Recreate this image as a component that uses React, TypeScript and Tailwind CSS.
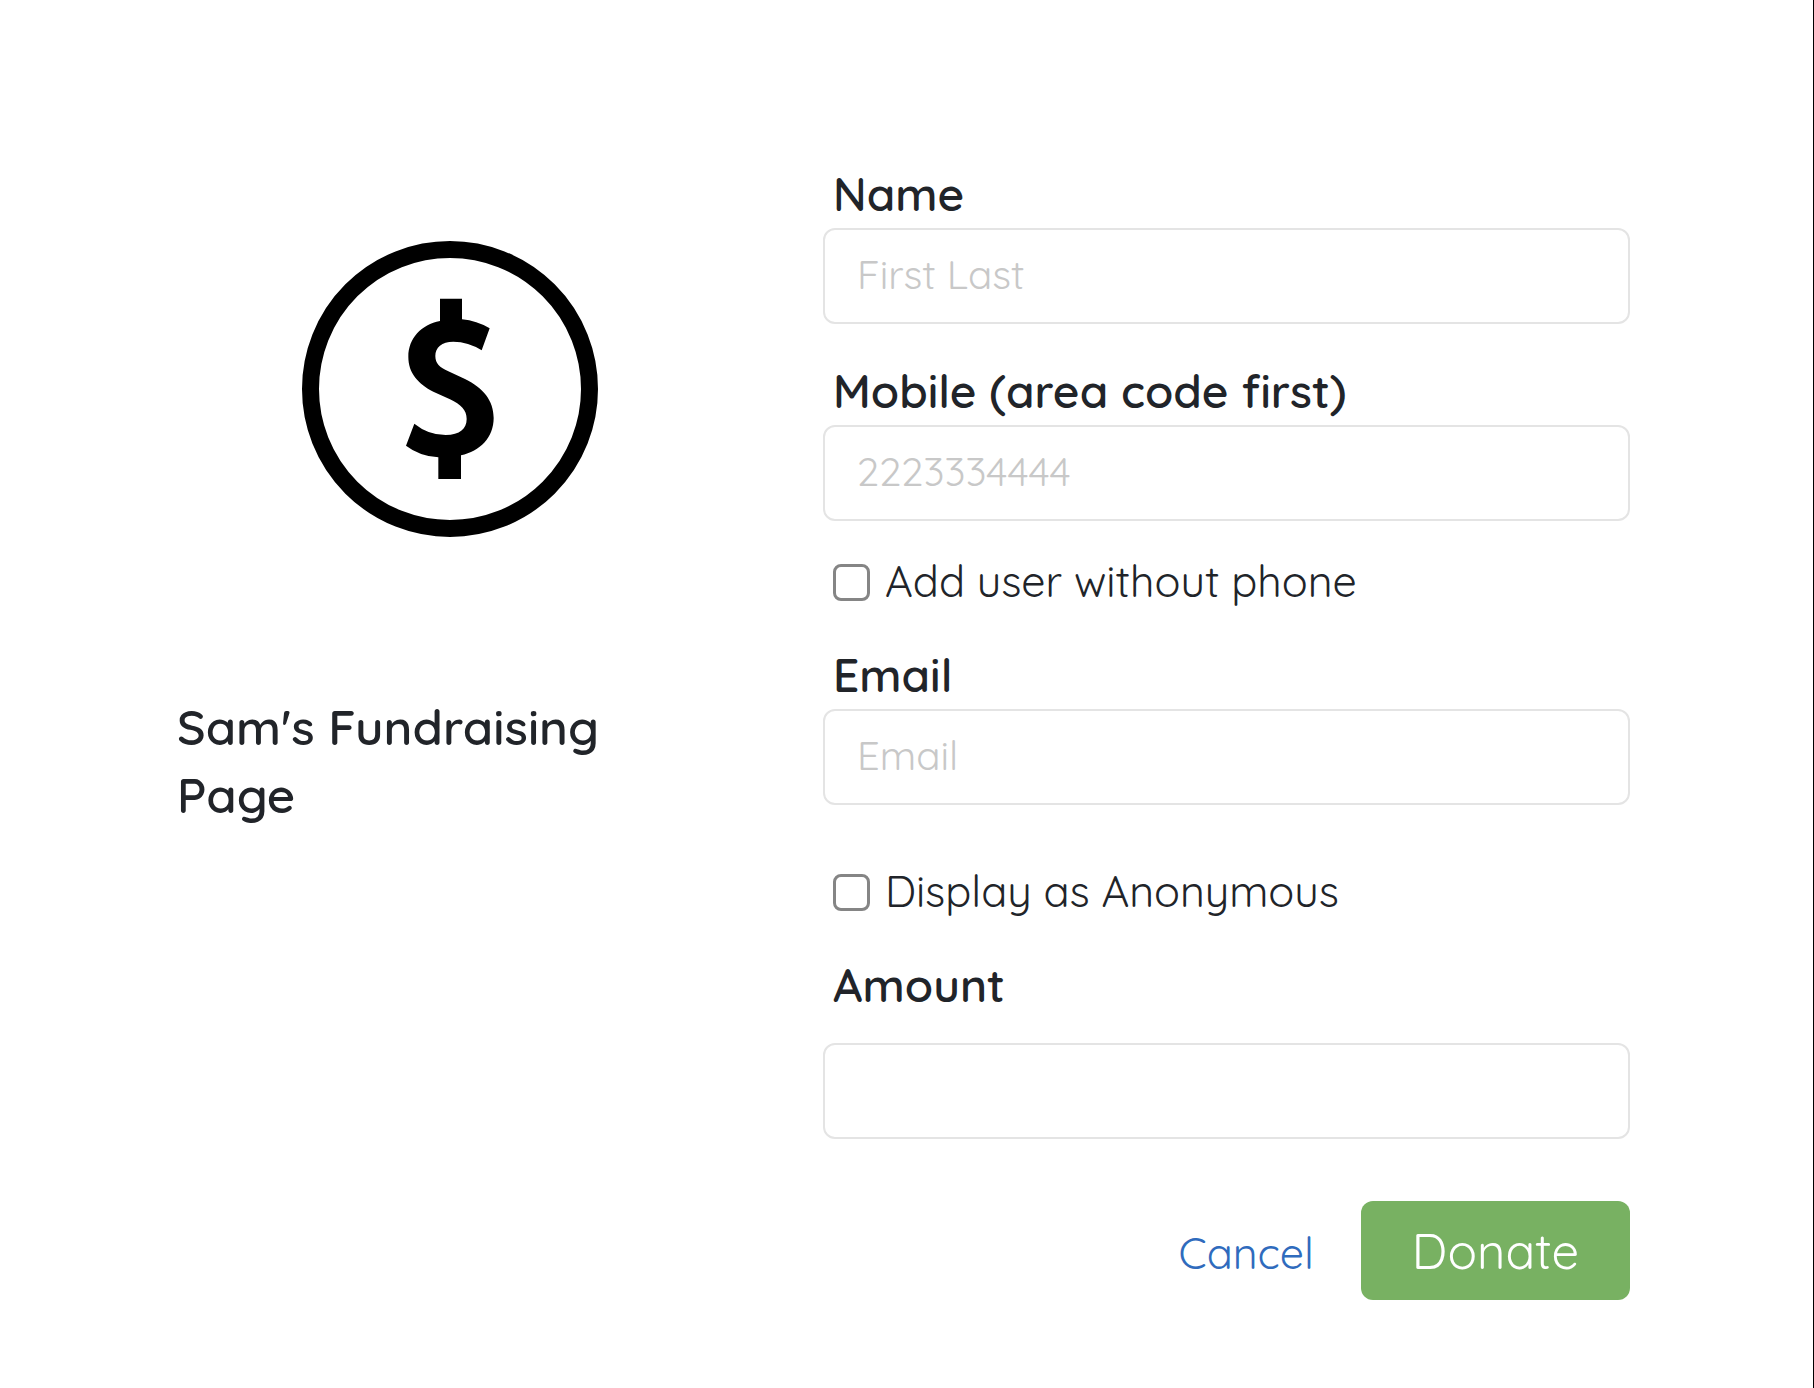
import type { InputHTMLAttributes, ReactNode } from "react";

function Label({ htmlFor, children }: { htmlFor: string; children: ReactNode }) {
  return (
    <label htmlFor={htmlFor} className="block pl-[10px] text-[46px] leading-[60px] font-semibold">
      {children}
    </label>
  );
}

function TextBox(props: InputHTMLAttributes<HTMLInputElement>) {
  return (
    <input
      {...props}
      className="block h-24 w-full rounded-xl border-2 border-[#e4e4e4] bg-white px-8 pb-1 text-[40px] outline-none placeholder:text-[#c8c8c8] focus:border-[#78b162]"
    />
  );
}

function Check({ id, children }: { id: string; children: ReactNode }) {
  return (
    <div className="flex items-center gap-[15px] pl-[10px]">
      <input
        id={id}
        type="checkbox"
        className="size-[37px] shrink-0 appearance-none rounded-lg border-3 border-[#858585] bg-white checked:bg-[#2f6bbd]"
      />
      <label htmlFor={id} className="pb-0.5 text-[43px] leading-[58px]">
        {children}
      </label>
    </div>
  );
}

function DollarIcon() {
  return (
    <svg viewBox="36 33 888 888" className="size-[296px]" aria-hidden="true">
      <circle cx="480" cy="477" r="418.5" fill="none" stroke="#000" strokeWidth="51" />
      <path d="M450 206H516V268Q560 272 599 295L575 361Q535 335 490 335C455 335 436 352 436 378C436 400 449 412 475 424L525 447C580 474 611 512 611 564C611 622 570 664 513 676V747H445V682Q388 678 348 647L373 581Q415 615 467 615C510 615 530 596 530 567C530 540 513 524 480 508L430 485C385 461 355 430 355 380C355 325 394 284 450 273Z" />
    </svg>
  );
}

export default function App() {
  return (
    <div className="min-h-screen border-r border-black bg-white text-[#212429] [font-family:Quicksand,Lato,sans-serif]">
      <main className="grid grid-cols-[546fr_807fr] gap-[100px] pt-[164px] pr-[183px] pb-[84px] pl-[177px]">
        <section className="pt-[77px]">
          <div className="flex justify-center">
            <DollarIcon />
          </div>
          <h1 className="mt-[156px] max-w-[440px] text-[49px] leading-[68px] font-semibold">
            Sam's Fundraising Page
          </h1>
        </section>
        <form onSubmit={(e) => e.preventDefault()}>
          <div className="flex flex-col gap-1">
            <Label htmlFor="name">Name</Label>
            <TextBox id="name" type="text" placeholder="First Last" />
          </div>
          <div className="mt-[37px] flex flex-col gap-1">
            <Label htmlFor="mobile">Mobile (area code first)</Label>
            <TextBox id="mobile" type="tel" placeholder="2223334444" />
          </div>
          <div className="mt-[31px]">
            <Check id="no-phone">Add user without phone</Check>
          </div>
          <div className="mt-[33px] flex flex-col gap-1">
            <Label htmlFor="email">Email</Label>
            <TextBox id="email" type="email" placeholder="Email" />
          </div>
          <div className="mt-[57px]">
            <Check id="anonymous">Display as Anonymous</Check>
          </div>
          <div className="mt-[33px] flex flex-col gap-7">
            <Label htmlFor="amount">Amount</Label>
            <TextBox id="amount" type="text" inputMode="decimal" />
          </div>
          <div className="mt-[62px] flex items-baseline justify-end gap-[47px]">
            <button type="button" className="text-[43px] leading-[60px] text-[#2f6bbd]">
              Cancel
            </button>
            <button type="submit" className="h-[99px] w-[269px] rounded-xl bg-[#78b162] text-[49px] text-white">
              Donate
            </button>
          </div>
        </form>
      </main>
    </div>
  );
}
